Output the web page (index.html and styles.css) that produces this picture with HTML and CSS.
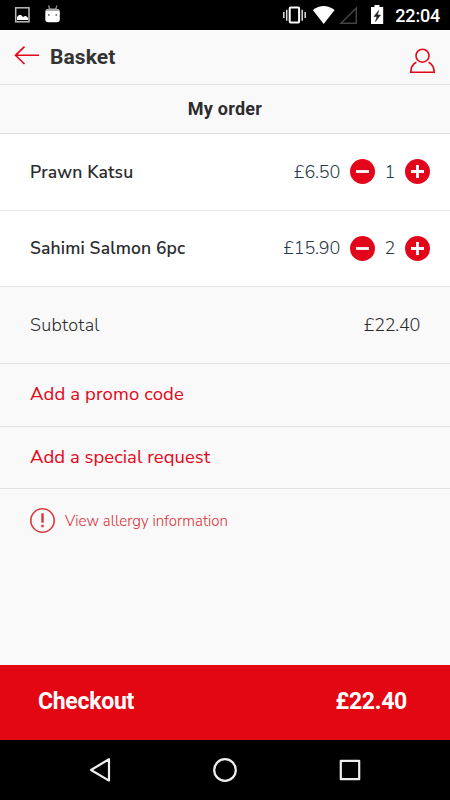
FILE: index.html
```html
<!DOCTYPE html>
<html lang="en">
<head>
<meta charset="utf-8">
<title>Basket</title>
<link rel="stylesheet" href="styles.css">
</head>
<body>
<div class="screen">
  <div class="status">
    <svg width="450" height="30" viewBox="0 0 450 30">
      <rect x="15.700" y="7.800" width="13.300" height="14" fill="none" stroke="#bbb" stroke-width="1.500"/>
      <path d="M17 20v-3l2-2h2l2 2 2-1 1 0 2 2v2z" fill="#fff"/>
      <path d="M48.500 5.500l1.500 4M57 5.500l-1.500 4" stroke="#888" stroke-width="1.300"/>
      <path d="M45.300 12q0-3 3-3h8.500q3 0 3 3v7.500q0 2.700-3 2.700h-8.500q-3 0-3-2.700z" fill="#fff"/>
      <path d="M46 11q1-2.500 3-2.500h7q2.500 0 3 2.500z" fill="#aaa"/>
      <path d="M48 15h1.600M55.500 15h1.600" stroke="#555" stroke-width="1.600"/>
      <rect x="289.700" y="7.600" width="9.400" height="14.800" rx="1" fill="none" stroke="#fff" stroke-width="2"/>
      <path d="M286.700 9.700v11M302.200 9.700v11" stroke="#ddd" stroke-width="1.500"/>
      <path d="M283.800 12v6M305.200 12v6" stroke="#ddd" stroke-width="1.500"/>
      <path d="M312.800 10q10.900-8 21.800 0L323.700 24z" fill="#fff"/>
      <path d="M341 23.200L356.300 8v15.200z" fill="none" stroke="#444" stroke-width="1.500"/>
      <path d="M371 7h3.500V5h5v2h3.700v17H371z" fill="#fff"/>
      <path d="M378.700 10.500l-4.700 6h3l-1.500 5 5-6.500h-3.200z" fill="#222" stroke="#222" stroke-width=".6"/>
    </svg>
    <span class="clock">22:04</span>
  </div>
  <header class="header">
    <svg class="back" width="26" height="20" viewBox="0 0 26 20"><path d="M25 10.300H1.500M10.500 1.700L1.500 10.300l9 8.700" fill="none" stroke="#e3061a" stroke-width="1.600"/></svg>
    <h1>Basket</h1>
    <svg class="user" width="27" height="26" viewBox="0 0 27 26"><g fill="none" stroke="#e3061a" stroke-width="1.600"><circle cx="13.500" cy="7.700" r="6.500"/><path d="M7.400 14.200Q1.800 17 1.800 24.200h23.400Q25 17 19.600 14.200"/></g></svg>
  </header>
  <h2 class="order-title">My order</h2>
  <div class="item">
    <span class="name">Prawn Katsu</span><span class="price">£6.50</span>
    <svg class="button" viewBox="0 0 25 25"><circle cx="12.500" cy="12.500" r="12.500"/><path d="M6 12.500h13"/></svg>
    <span class="count">1</span>
    <svg class="button" viewBox="0 0 25 25"><circle cx="12.500" cy="12.500" r="12.500"/><path d="M6 12.500h13M12.500 6v13"/></svg>
  </div>
  <div class="item">
    <span class="name">Sahimi Salmon 6pc</span><span class="price">£15.90</span>
    <svg class="button" viewBox="0 0 25 25"><circle cx="12.500" cy="12.500" r="12.500"/><path d="M6 12.500h13"/></svg>
    <span class="count">2</span>
    <svg class="button" viewBox="0 0 25 25"><circle cx="12.500" cy="12.500" r="12.500"/><path d="M6 12.500h13M12.500 6v13"/></svg>
  </div>
  <div class="subtotal"><span class="label">Subtotal</span><span class="amount">£22.40</span></div>
  <div class="link promo"><span>Add a promo code</span></div>
  <div class="link special"><span>Add a special request</span></div>
  <div class="allergy">
    <svg width="25" height="25" viewBox="0 0 25 25"><circle cx="12.500" cy="12.500" r="11.700" fill="none" stroke="#d9383e" stroke-width="1.600"/><path d="M12.500 5.300v9.400M12.500 16.700v2.600" stroke="#d9383e" stroke-width="2.400"/></svg>
    <span>View allergy information</span>
  </div>
  <div class="checkout"><span>Checkout</span><span>£22.40</span></div>
  <nav class="nav">
    <svg width="450" height="60" viewBox="0 0 450 60" fill="none" stroke="#eee" stroke-width="2.200" stroke-linejoin="round"><path d="M91 30L109 19.200v21.400z"/><circle cx="225" cy="30" r="10.800"/><rect x="340.800" y="20.800" width="18.400" height="18.400"/></svg>
  </nav>
</div>
</body>
</html>
```
FILE: styles.css
```css
* { box-sizing: border-box; }
body { margin: 0; font-family: "Nunito Sans", Nunito, "Open Sans", sans-serif; }
.screen { width: 450px; height: 800px; display: flex; flex-direction: column; background: #f9f9f9; overflow: hidden; color: #2c2c2e; }
svg { display: block; flex: none; }
.status { position: relative; height: 30px; background: #000; flex: none; }
.clock { position: absolute; right: 10px; top: 4px; font: 500 18px/24px Roboto, sans-serif; color: #fff; letter-spacing: -.2px; }
.header { height: 55px; display: flex; align-items: center; padding: 0 14px; border-bottom: 1px solid #e2e2e2; }
.back { margin-top: -4px; }
.header h1 { margin: 0 auto 0 10px; font: 700 21px/26px Roboto, sans-serif; color: #333; letter-spacing: .1px; }
.user { margin-top: 8px; }
.order-title { height: 49px; margin: 0; text-align: center; font: 700 18px/47px Roboto, sans-serif; letter-spacing: .25px; border-bottom: 1px solid #e2e2e2; }
.item { height: 76.500px; display: flex; align-items: center; padding: 0 20px 0 30px; background: #fff; border-bottom: 1.500px solid #e6e6e6; }
.name { margin-right: auto; font-size: 17.500px; font-weight: 600; letter-spacing: .14px; }
.price, .count { font-size: 18px; font-weight: 300; color: #283746; }
.price { margin-right: 10px; letter-spacing: -.2px; }
.count { width: 30px; text-align: center; }
.button { width: 25px; height: 25px; fill: #e3061a; stroke: #fff; stroke-width: 2.800; }
.button circle { stroke: none; }
.subtotal { height: 77px; display: flex; align-items: center; justify-content: space-between; padding: 0 30px 1px; font-size: 18px; font-weight: 300; border-bottom: 1px solid #e2e2e2; }
.label { letter-spacing: .3px; }
.amount { letter-spacing: -.3px; }
.link { height: 63px; display: flex; align-items: center; padding: 0 30px 2px; font-size: 18.500px; letter-spacing: .12px; color: #e3061a; border-bottom: 1px solid #e2e2e2; }
.special { height: 62px; letter-spacing: .04px; }
.allergy { height: 64px; display: flex; align-items: center; gap: 10px; padding: 0 30px 1px; font-size: 15px; font-weight: 300; letter-spacing: .04px; color: #d92d35; }
.checkout { height: 75px; margin-top: auto; flex: none; display: flex; align-items: center; justify-content: space-between; padding: 0 43px 1px 38px; background: #e30613; color: #fff; font: 700 23px/30px Roboto, sans-serif; letter-spacing: -.28px; }
.nav { height: 60px; background: #000; flex: none; }
```
